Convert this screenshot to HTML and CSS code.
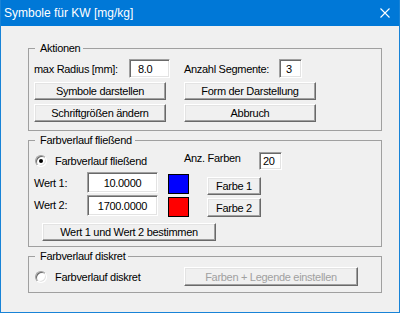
FILE: index.html
```html
<!DOCTYPE html>
<html lang="de">
<head>
    <meta charset="UTF-8">
    <meta name="viewport" content="width=device-width, initial-scale=1.0">
    <title>Symbole für KW [mg/kg]</title>
    <link rel="stylesheet" href="styles.css">
</head>
<body>
    <div class="window">
        <div class="titlebar">
            <span class="title">Symbole für KW [mg/kg]</span>
            <svg class="close" width="10" height="10" viewBox="0 0 10 10">
                <path d="M0.5 0.5 L9.5 9.5 M9.5 0.5 L0.5 9.5" stroke="#fff" stroke-width="1.1" fill="none"/>
            </svg>
        </div>

        <div class="client">
            <!-- Aktionen -->
            <fieldset class="group group-actions">
                <legend>Aktionen</legend>
                <div class="field-row">
                    <span class="lbl lbl-radius">max Radius [mm]:</span>
                    <input class="field f-radius" type="text" value="8.0">
                    <span class="lbl lbl-seg">Anzahl Segmente:</span>
                    <input class="field f-seg" type="text" value="3">
                </div>
                <div class="btn-grid">
                    <button class="btn btn-default">Symbole darstellen</button>
                    <button class="btn">Form der Darstellung</button>
                    <button class="btn">Schriftgrößen ändern</button>
                    <button class="btn">Abbruch</button>
                </div>
            </fieldset>

            <!-- Farbverlauf fliessend -->
            <fieldset class="group group-flow">
                <legend>Farbverlauf fließend</legend>
                <div class="option-row">
                    <div class="radio-opt">
                        <span class="radio checked"></span>
                        <span>Farbverlauf fließend</span>
                    </div>
                    <span class="lbl lbl-anz">Anz. Farben</span>
                    <input class="field f-anz" type="text" value="20">
                </div>
                <div class="value-grid">
                    <span class="lbl">Wert 1:</span>
                    <input class="field f-value" type="text" value="10.0000">
                    <span class="swatch swatch-1"></span>
                    <button class="btn btn-color btn-color-1">Farbe 1</button>

                    <span class="lbl">Wert 2:</span>
                    <input class="field f-value" type="text" value="1700.0000">
                    <span class="swatch swatch-2"></span>
                    <button class="btn btn-color btn-color-2">Farbe 2</button>
                </div>
                <button class="btn btn-range">Wert 1 und Wert 2 bestimmen</button>
            </fieldset>

            <!-- Farbverlauf diskret -->
            <fieldset class="group group-discrete">
                <legend>Farbverlauf diskret</legend>
                <div class="option-row">
                    <div class="radio-opt">
                        <span class="radio"></span>
                        <span>Farbverlauf diskret</span>
                    </div>
                    <button class="btn btn-legend" disabled>Farben + Legende einstellen</button>
                </div>
            </fieldset>
        </div>
    </div>
</body>
</html>
```

FILE: styles.css
```css
body {
    margin: 0;
    background-color: #f0f0f0;
    font-family: "Liberation Sans", Arial, sans-serif;
    font-size: 11px;
    letter-spacing: -0.3px;
    color: #000;
}

.window {
    width: 400px;
    height: 313px;
    box-sizing: border-box;
    border: 1px solid #1883d7;
    border-top: 0;
    background-color: #f0f0f0;
}

.titlebar {
    height: 26px;
    display: flex;
    align-items: center;
    justify-content: space-between;
    padding: 0 9px 0 3px;
    background-color: #0078d7;
    color: #fff;
    font-size: 12px;
    letter-spacing: 0;
}

.client {
    padding: 0 17px 0 27px;
}

.group {
    margin: 3px 0 0;
    padding: 4px 5px 8px;
    border: 1px solid #a0a0a0;
    min-width: 0;
}

.group legend {
    padding: 0 3px 0 5px;
    margin-left: 1px;
    line-height: 13px;
}

.group-actions {
    margin-top: 16px;
}

.group-flow {
    padding-bottom: 5px;
}

.group-discrete {
    padding-bottom: 6px;
}

.lbl {
    white-space: nowrap;
}

/* sunken edit boxes */
.field {
    box-sizing: border-box;
    height: 19px;
    margin: 0;
    padding: 0;
    border: 1px solid;
    border-color: #a0a0a0 #fff #fff #a0a0a0;
    box-shadow: inset 1px 1px #696969, inset -1px -1px #e3e3e3;
    background-color: #fff;
    font: inherit;
    letter-spacing: inherit;
    color: #000;
    outline: none;
}

/* raised push buttons */
.btn {
    box-sizing: border-box;
    height: 18px;
    margin: 0;
    padding: 0;
    border: 1px solid;
    border-color: #fff #696969 #696969 #fff;
    box-shadow: inset -1px -1px #a0a0a0, inset 1px 1px #e3e3e3;
    background-color: #f0f0f0;
    font: inherit;
    letter-spacing: inherit;
    color: #000;
}

.btn:disabled {
    color: #a0a0a0;
}

.field-row {
    display: flex;
    align-items: center;
    height: 19px;
}

.lbl-radius {
    width: 95px;
}

.f-radius {
    width: 41px;
    padding-left: 8px;
}

.lbl-seg {
    width: 95px;
    margin-left: 14px;
}

.f-seg {
    width: 23px;
    padding-left: 6px;
}

.btn-grid {
    display: grid;
    grid-template-columns: 132px 132px;
    grid-auto-rows: 18px;
    column-gap: 18px;
    row-gap: 4px;
    margin-top: 4px;
}

.option-row {
    display: flex;
    align-items: center;
    height: 19px;
}

.radio-opt {
    width: 150px;
    display: flex;
    align-items: center;
}

.radio {
    position: relative;
    box-sizing: border-box;
    width: 12px;
    height: 12px;
    margin: 0 8px 0 1px;
    border-radius: 50%;
    border: 1px solid;
    border-color: #a0a0a0 #fff #fff #a0a0a0;
    box-shadow: inset 1px 1px #696969, inset -1px -1px #e3e3e3;
    background-color: #fff;
}

.radio.checked::after {
    content: "";
    position: absolute;
    left: 3px;
    top: 3px;
    width: 4px;
    height: 4px;
    border-radius: 50%;
    background-color: #000;
}

.lbl-anz {
    width: 75px;
    margin-bottom: 5px;
}

.f-anz {
    width: 23px;
    height: 18px;
    padding-left: 3px;
}

.value-grid {
    display: grid;
    grid-template-columns: 53px 71px 31px 72px;
    grid-template-rows: 23px 22px;
    align-items: start;
    margin-top: 2px;
}

.value-grid .lbl {
    align-self: center;
    margin-bottom: 2px;
}

.f-value {
    width: 71px;
    height: 21px;
    text-align: center;
}

.swatch {
    box-sizing: border-box;
    width: 21px;
    height: 20px;
    margin: 2px 0 0 10px;
    border: 1px solid #000;
}

.swatch-1 {
    background-color: #0000ff;
}

.swatch-2 {
    background-color: #ff0000;
}

.btn-color {
    width: 54px;
    margin-left: 18px;
}

.btn-color-1 {
    margin-top: 5px;
}

.btn-color-2 {
    height: 19px;
    margin-top: 3px;
}

.btn-range {
    display: block;
    width: 174px;
    margin: 6px 0 0 8px;
}

.btn-legend {
    width: 174px;
    height: 19px;
}
```
